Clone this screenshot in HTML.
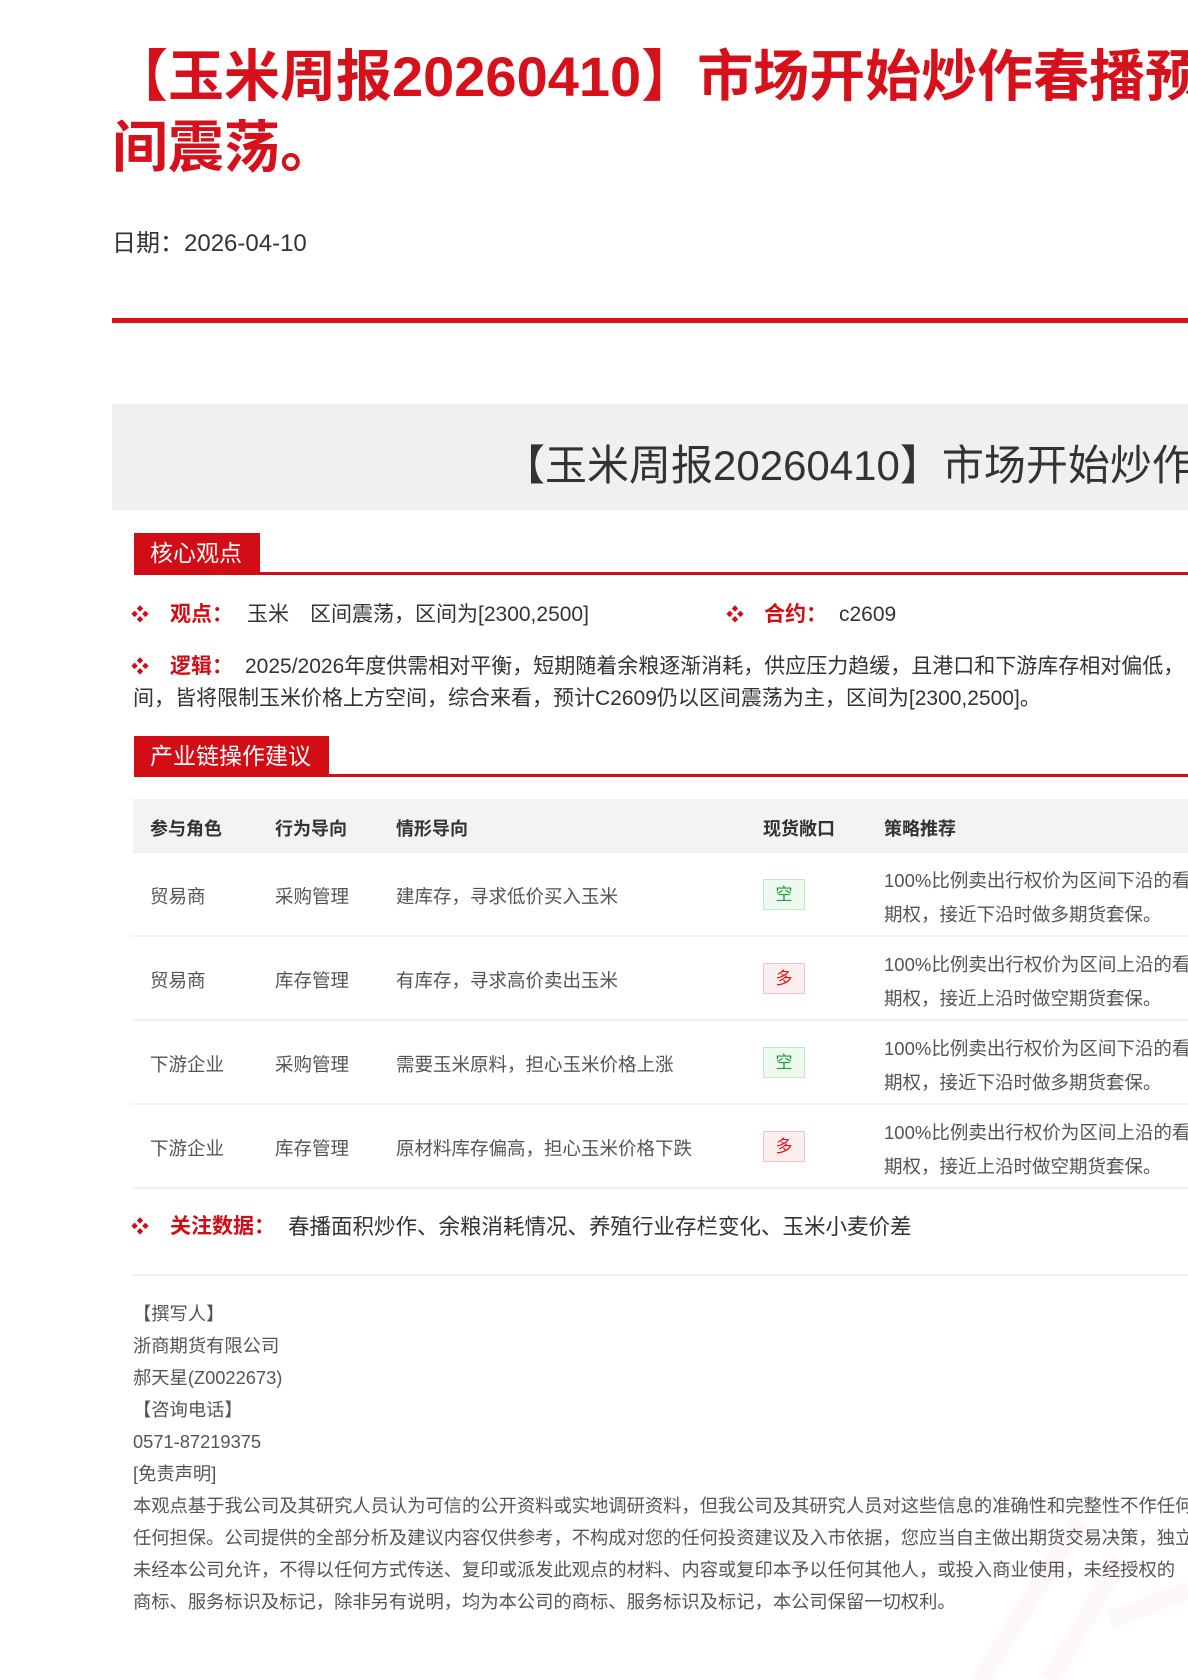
<!DOCTYPE html>
<html><head><meta charset="utf-8"><style>
*{margin:0;padding:0;box-sizing:border-box}
html,body{width:1188px;height:1680px;overflow:hidden;background:#fff}
body{position:relative;font-family:"Liberation Sans","Noto Sans CJK SC",sans-serif;color:#333}
.a{position:absolute;white-space:nowrap}
.t{color:#d7111c;font-weight:700;font-size:56px;line-height:72px;left:112px}
.lab{background:#d30d15;color:#fff;font-size:23px;line-height:40px;padding:0 18px 0 16px}
.rl{height:3px;background:#d30d15;left:134px;right:0}
.bul{color:#d30d15;font-size:18px;line-height:30px}
.k{color:#d30d15;font-weight:700;font-size:21px;line-height:30px}
.v{font-size:21px;color:#333;line-height:30px}
.th{font-size:18px;font-weight:700;color:#333}
.td{font-size:18.5px;color:#555}
.hl{height:2px;background:#eef0f3;left:133px;right:0}
.bd{width:42px;height:31px;font-size:17px;line-height:29px;text-align:center;border:1px solid}
.g{color:#1aa02f;background:#eefaef;border-color:#bfe7c4}
.r{color:#e0141e;background:#fdeeee;border-color:#f5c4c6}
.f{font-size:18.3px;color:#555;left:133px;line-height:32px}
</style></head><body>
<div class="a t" style="top:41px;left:112px">【玉米周报20260410】市场开始炒作春播预期，玉米区</div>
<div class="a t" style="top:112px">间震荡。</div>
<div class="a" style="left:112px;top:223px;font-size:24px;color:#333">日期：2026-04-10</div>
<div class="a" style="left:112px;right:0;top:318px;height:5px;background:#d9101a"></div>
<div class="a" style="left:112px;right:0;top:404px;height:106px;background:#f0f0f0"></div>
<div class="a" style="left:503px;top:432px;font-size:42px;color:#333">【玉米周报20260410】市场开始炒作春播预期，玉米区间震荡。</div>

<div class="a lab" style="left:134px;top:533px">核心观点</div>
<div class="a rl" style="top:572px"></div>
<div class="a bul" style="left:131px;top:600px">❖</div>
<div class="a k" style="left:170px;top:600px">观点：</div>
<div class="a v" style="left:247px;top:600px">玉米　区间震荡，区间为[2300,2500]</div>
<div class="a bul" style="left:726px;top:600px">❖</div>
<div class="a k" style="left:764px;top:600px">合约：</div>
<div class="a v" style="left:839px;top:600px">c2609</div>
<div class="a bul" style="left:131px;top:652px">❖</div>
<div class="a k" style="left:170px;top:652px">逻辑：</div>
<div class="a v" style="left:245px;top:652px">2025/2026年度供需相对平衡，短期随着余粮逐渐消耗，供应压力趋缓，且港口和下游库存相对偏低，</div>
<div class="a v" style="left:133px;top:684px">间，皆将限制玉米价格上方空间，综合来看，预计C2609仍以区间震荡为主，区间为[2300,2500]。</div>

<div class="a lab" style="left:134px;top:736px">产业链操作建议</div>
<div class="a rl" style="top:774px"></div>

<div class="a" style="left:133px;right:0;top:799px;height:53px;background:#f2f3f5"></div>
<div class="a hl" style="top:851px"></div>
<div class="a th" style="left:150px;top:815px">参与角色</div>
<div class="a th" style="left:275px;top:815px">行为导向</div>
<div class="a th" style="left:396px;top:815px">情形导向</div>
<div class="a th" style="left:763px;top:815px">现货敞口</div>
<div class="a th" style="left:884px;top:815px">策略推荐</div>

<div class="a td" style="left:150px;top:883px">贸易商</div><div class="a td" style="left:275px;top:883px">采购管理</div><div class="a td" style="left:396px;top:883px">建库存，寻求低价买入玉米</div>
<div class="a bd g" style="left:763px;top:879px">空</div>
<div class="a td" style="left:884px;top:864px;line-height:34px">100%比例卖出行权价为区间下沿的看跌<br>期权，接近下沿时做多期货套保。</div>
<div class="a hl" style="top:935px"></div>

<div class="a td" style="left:150px;top:967px">贸易商</div><div class="a td" style="left:275px;top:967px">库存管理</div><div class="a td" style="left:396px;top:967px">有库存，寻求高价卖出玉米</div>
<div class="a bd r" style="left:763px;top:963px">多</div>
<div class="a td" style="left:884px;top:948px;line-height:34px">100%比例卖出行权价为区间上沿的看涨<br>期权，接近上沿时做空期货套保。</div>
<div class="a hl" style="top:1019px"></div>

<div class="a td" style="left:150px;top:1051px">下游企业</div><div class="a td" style="left:275px;top:1051px">采购管理</div><div class="a td" style="left:396px;top:1051px">需要玉米原料，担心玉米价格上涨</div>
<div class="a bd g" style="left:763px;top:1047px">空</div>
<div class="a td" style="left:884px;top:1032px;line-height:34px">100%比例卖出行权价为区间下沿的看跌<br>期权，接近下沿时做多期货套保。</div>
<div class="a hl" style="top:1103px"></div>

<div class="a td" style="left:150px;top:1135px">下游企业</div><div class="a td" style="left:275px;top:1135px">库存管理</div><div class="a td" style="left:396px;top:1135px">原材料库存偏高，担心玉米价格下跌</div>
<div class="a bd r" style="left:763px;top:1131px">多</div>
<div class="a td" style="left:884px;top:1116px;line-height:34px">100%比例卖出行权价为区间上沿的看涨<br>期权，接近上沿时做空期货套保。</div>
<div class="a hl" style="top:1187px"></div>

<div class="a bul" style="left:131px;top:1212px">❖</div>
<div class="a k" style="left:170px;top:1212px">关注数据：</div>
<div class="a v" style="left:288px;top:1212px;font-size:21.5px">春播面积炒作、余粮消耗情况、养殖行业存栏变化、玉米小麦价差</div>
<div class="a" style="left:133px;right:0;top:1274px;height:2px;background:#eeeeee"></div>

<div class="a f" style="top:1298px">【撰写人】<br>浙商期货有限公司<br>郝天星(Z0022673)<br>【咨询电话】<br>0571-87219375<br>[免责声明]<br>本观点基于我公司及其研究人员认为可信的公开资料或实地调研资料，但我公司及其研究人员对这些信息的准确性和完整性不作任何保证，<br>任何担保。公司提供的全部分析及建议内容仅供参考，不构成对您的任何投资建议及入市依据，您应当自主做出期货交易决策，独立承担<br>未经本公司允许，不得以任何方式传送、复印或派发此观点的材料、内容或复印本予以任何其他人，或投入商业使用，未经授权的<br>商标、服务标识及标记，除非另有说明，均为本公司的商标、服务标识及标记，本公司保留一切权利。</div>

<svg class="a" style="left:960px;top:1500px" width="228" height="180"><path d="M20 180 L120 20 M90 180 L160 60 M150 120 L228 90" stroke="#d30d15" stroke-opacity="0.03" stroke-width="18" fill="none"/></svg>
</body></html>
